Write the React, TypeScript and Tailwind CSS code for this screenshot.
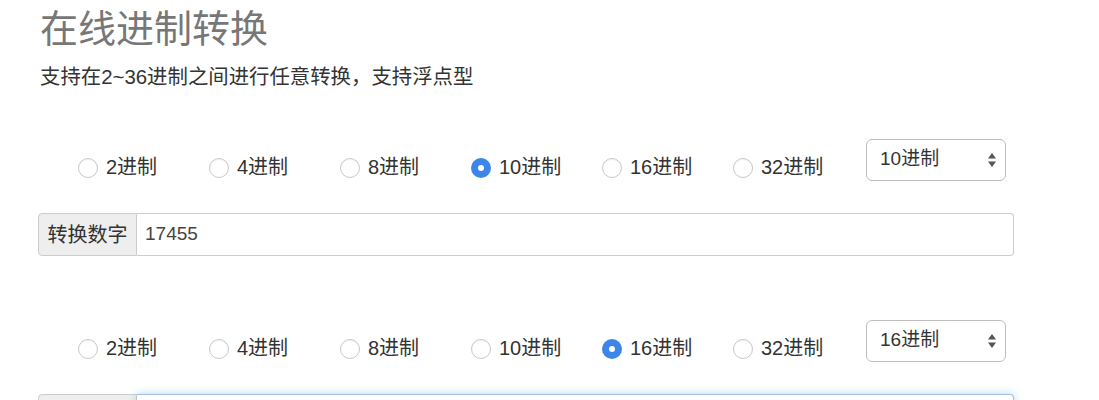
import React from "react";

const bases = ["2进制", "4进制", "8进制", "10进制", "16进制", "32进制"];

function Radio({ checked }: { checked: boolean }) {
  if (checked) {
    return (
      <span className="flex h-[20px] w-[20px] shrink-0 items-center justify-center rounded-full bg-[#3b86e8]">
        <span className="h-[6px] w-[6px] rounded-full bg-white" />
      </span>
    );
  }
  return (
    <span className="h-[20px] w-[20px] shrink-0 rounded-full border border-[#c8c8c8] bg-white shadow-[inset_0_1px_1px_rgba(0,0,0,0.05)]" />
  );
}

function Block({ sel, value, focused }: { sel: number; value: string; focused?: boolean }) {
  return (
    <div className="flex flex-col">
      <div className="flex items-start pl-[40px]">
        {bases.map((b, i) => (
          <div key={b} className="mt-[19px] flex w-[131px] items-center">
            <Radio checked={i === sel} />
            <span className="ml-[8px] -mt-[3px] text-[20px] leading-[20px] text-[#333]">{b}</span>
          </div>
        ))}
        <div className="ml-[2px] flex h-[42px] w-[140px] items-center justify-between rounded-[6px] border border-[#bdbdbd] bg-white pl-[13px] pr-[8px]">
          <span className="-mt-[2px] text-[19px] leading-[20px] text-[#333]">{bases[sel]}</span>
          <svg width="10" height="16" viewBox="0 0 10 16">
            <path d="M5 1 L9 6.5 L1 6.5 Z" fill="#555" />
            <path d="M5 15 L9 9.5 L1 9.5 Z" fill="#555" />
          </svg>
        </div>
      </div>
      <div className="mt-[32px] flex h-[43px] w-[976px]">
        <div className="flex w-[99px] items-center justify-center rounded-l-[4px] border border-[#cccccc] bg-[#eeeeee] text-[20px] text-[#333]">
          转换数字
        </div>
        <div
          className={
            "flex flex-1 items-center rounded-r-[4px] border border-l-0 bg-white pl-[8px] text-[19px] text-[#444] " +
            (focused
              ? "border-[#9fbfe0] shadow-[0_0_8px_rgba(102,175,233,0.5)]"
              : "border-[#cccccc]")
          }
        >
          {value}
        </div>
      </div>
    </div>
  );
}

export default function App() {
  return (
    <div
      className="min-h-[400px] bg-white pl-[38px]"
      style={{ fontFamily: '"Liberation Sans", "Noto Sans CJK SC", sans-serif' }}
    >
      <h1 className="pl-[2px] pt-[10px] text-[38px] leading-[38px] text-[#777]">在线进制转换</h1>
      <p className="mt-[19px] pl-[2px] text-[20.4px] leading-[20px] text-[#333]">
        支持在2~36进制之间进行任意转换，支持浮点型
      </p>
      <div className="mt-[52px]">
        <Block sel={3} value="17455" />
      </div>
      <div className="mt-[64px]">
        <Block sel={4} value="" focused />
      </div>
    </div>
  );
}
